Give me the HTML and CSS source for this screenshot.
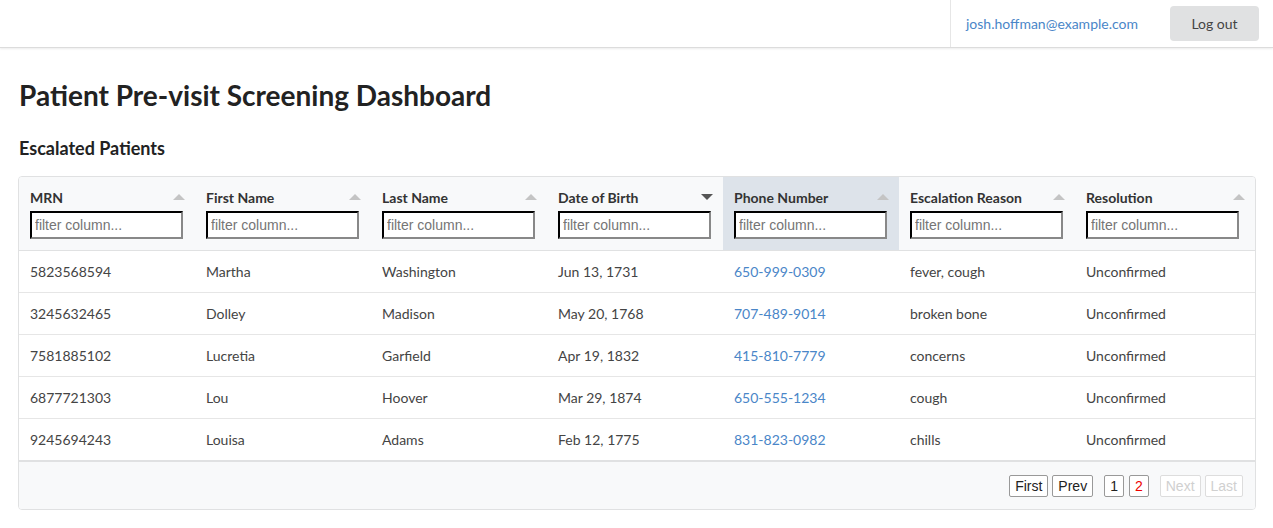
FILE: index.html
```html
<!DOCTYPE html>
<html>
<head>
<meta charset="utf-8">
<link rel="stylesheet" href="styles.css">
</head>
<body>
<header class="topbar">
  <div class="user">
    <span class="email">josh.hoffman@example.com</span>
    <button class="logout">Log out</button>
  </div>
</header>
<main class="main">
  <h1 class="title">Patient Pre-visit Screening Dashboard</h1>
  <h2 class="subtitle">Escalated Patients</h2>
  <div class="grid">
    <table class="tbl">
      <thead>
        <tr>
          <th><div class="th-top"><span>MRN</span><span class="sort up"></span></div><input class="filter" placeholder="filter column..."></th>
          <th><div class="th-top"><span>First Name</span><span class="sort up"></span></div><input class="filter" placeholder="filter column..."></th>
          <th><div class="th-top"><span>Last Name</span><span class="sort up"></span></div><input class="filter" placeholder="filter column..."></th>
          <th><div class="th-top"><span>Date of Birth</span><span class="sort down"></span></div><input class="filter" placeholder="filter column..."></th>
          <th class="active"><div class="th-top"><span>Phone Number</span><span class="sort up"></span></div><input class="filter" placeholder="filter column..."></th>
          <th><div class="th-top"><span>Escalation Reason</span><span class="sort up"></span></div><input class="filter" placeholder="filter column..."></th>
          <th class="last"><div class="th-top"><span>Resolution</span><span class="sort up"></span></div><input class="filter" placeholder="filter column..."></th>
        </tr>
      </thead>
      <tbody>
        <tr><td>5823568594</td><td>Martha</td><td>Washington</td><td>Jun 13, 1731</td><td><a class="phone">650-999-0309</a></td><td>fever, cough</td><td>Unconfirmed</td></tr>
        <tr><td>3245632465</td><td>Dolley</td><td>Madison</td><td>May 20, 1768</td><td><a class="phone">707-489-9014</a></td><td>broken bone</td><td>Unconfirmed</td></tr>
        <tr><td>7581885102</td><td>Lucretia</td><td>Garfield</td><td>Apr 19, 1832</td><td><a class="phone">415-810-7779</a></td><td>concerns</td><td>Unconfirmed</td></tr>
        <tr><td>6877721303</td><td>Lou</td><td>Hoover</td><td>Mar 29, 1874</td><td><a class="phone">650-555-1234</a></td><td>cough</td><td>Unconfirmed</td></tr>
        <tr><td>9245694243</td><td>Louisa</td><td>Adams</td><td>Feb 12, 1775</td><td><a class="phone">831-823-0982</a></td><td>chills</td><td>Unconfirmed</td></tr>
      </tbody>
    </table>
    <div class="pager">
      <button class="pbtn">First</button>
      <button class="pbtn">Prev</button>
      <span class="pages">
        <button class="pbtn">1</button>
        <button class="pbtn current">2</button>
      </span>
      <button class="pbtn" disabled>Next</button>
      <button class="pbtn" disabled>Last</button>
    </div>
  </div>
</main>
</body>
</html>
```

FILE: styles.css
```css
* { box-sizing: border-box; }
body {
  margin: 0;
  font-family: Lato, "Open Sans", Arial, sans-serif;
  color: #222;
  background: #fff;
}
.topbar {
  height: 48px;
  display: flex;
  justify-content: flex-end;
  border-bottom: 1px solid #dcdcdc;
  box-shadow: 0 1px 2px rgba(0,0,0,0.08);
}
.user {
  display: flex;
  align-items: center;
  border-left: 1px solid #e6e6e6;
  padding: 0 14px 0 15px;
}
.email {
  font-size: 14px;
  color: #4a86c8;
}
.logout {
  margin-left: 32px;
  width: 89px;
  height: 35px;
  margin-top: -1px;
  border: none;
  border-radius: 4px;
  background: #e0e1e2;
  color: #444;
  font-family: Lato, sans-serif;
  font-size: 14px;
}
.main {
  padding: 0 17px 0 18px;
}
.title {
  margin: 30px 0 0 1px;
  font-size: 28px;
  line-height: 34px;
  font-weight: 700;
  color: #222;
}
.subtitle {
  margin: 24px 0 0 1px;
  font-size: 18px;
  line-height: 24px;
  font-weight: 700;
  color: #222;
}
.grid {
  margin-top: 16px;
  border: 1px solid #e0e1e2;
  border-radius: 4px;
  overflow: hidden;
}
.tbl {
  width: 100%;
  border-collapse: collapse;
  table-layout: fixed;
}
.tbl th {
  width: 176px;
  background: #f8f9fa;
  text-align: left;
  font-weight: 700;
  font-size: 14px;
  color: #333;
  padding: 9px 12px 11px 11px;
  vertical-align: top;
  border-bottom: 1px solid #e0e1e2;
}
.tbl th.last { width: auto; }
.tbl th.active { background: #dde3ea; }
.th-top {
  display: flex;
  justify-content: space-between;
  align-items: center;
  height: 22px;
  margin-bottom: 3px;
}
.sort {
  width: 0;
  height: 0;
  border-left: 6px solid transparent;
  border-right: 6px solid transparent;
  margin-right: -2px;
}
.sort.up { border-bottom: 6px solid #c4c4c4; }
.sort.down { border-top: 6px solid #555; }
.filter {
  display: block;
  width: 153px;
  height: 28px;
  border: 2px inset #767676;
  border-color: #222 #888 #888 #222;
  padding: 1px 3px;
  font-family: "Liberation Sans", Arial, sans-serif;
  font-size: 14px;
  background: #fff;
}
.filter::placeholder { color: #757575; }
.tbl td {
  height: 42px;
  padding: 0 11px;
  font-size: 14px;
  color: #444;
  border-bottom: 1px solid #e6e6e6;
  background: #fff;
}
.tbl tbody tr:last-child td { border-bottom: 2px solid #e0e1e2; }
.phone { color: #4a86c8; }
.pager {
  background: #f8f9fa;
  height: 47px;
  padding-top: 2px;
  display: flex;
  justify-content: flex-end;
  align-items: center;
  padding-right: 12px;
  gap: 4px;
}
.pages {
  display: flex;
  gap: 5px;
  margin: 0 7px;
}
.pbtn {
  font-family: "Liberation Sans", Arial, sans-serif;
  font-size: 14px;
  height: 22px;
  padding: 0 5px;
  border: 1px solid #999;
  border-radius: 2px;
  background: #fff;
  color: #222;
}
.pbtn.current { color: #e00; }
.pbtn:disabled {
  color: #d0d0d0;
  border-color: #ddd;
}
```
